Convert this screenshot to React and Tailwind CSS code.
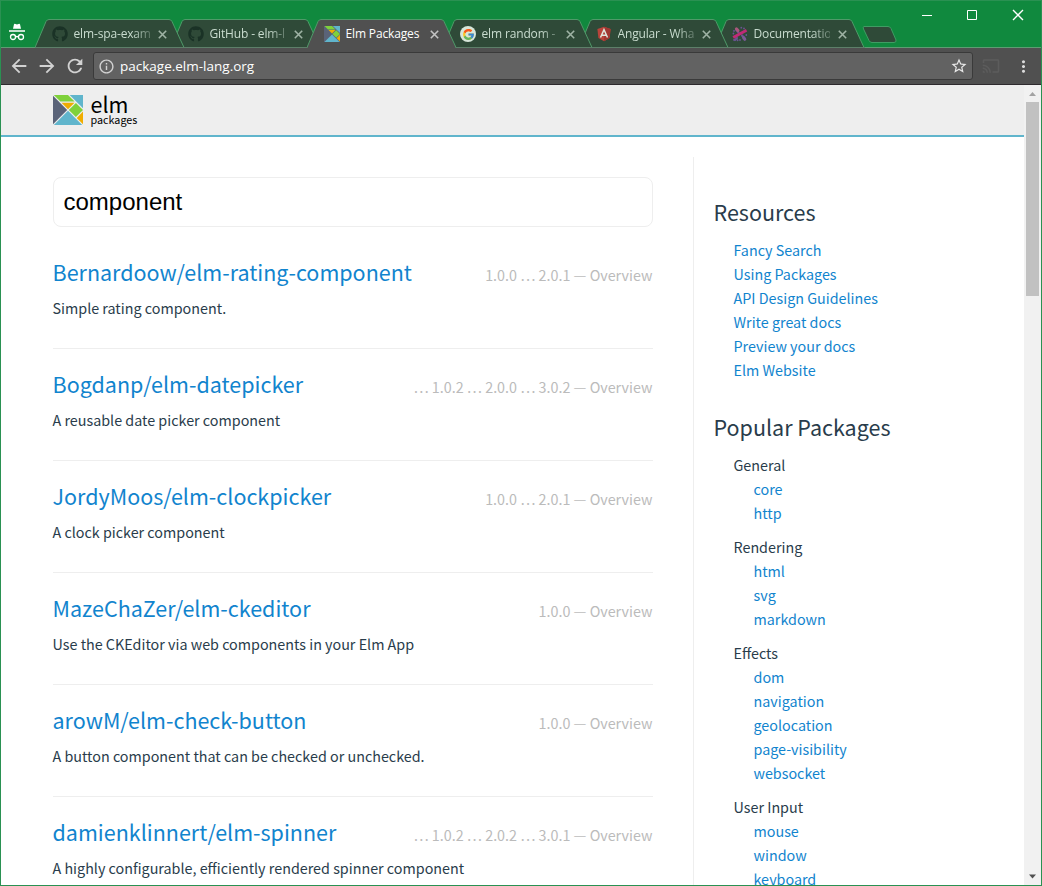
import React from "react";
import { MdArrowBack, MdArrowForward, MdRefresh, MdInfoOutline, MdStarBorder, MdCast, MdMoreVert } from "react-icons/md";
import { FaGithub } from "react-icons/fa";
import { FcGoogle } from "react-icons/fc";

const packages = [
  { name: "Bernardoow/elm-rating-component", versions: "1.0.0 … 2.0.1 — Overview", summary: "Simple rating component." },
  { name: "Bogdanp/elm-datepicker", versions: "… 1.0.2 … 2.0.0 … 3.0.2 — Overview", summary: "A reusable date picker component" },
  { name: "JordyMoos/elm-clockpicker", versions: "1.0.0 … 2.0.1 — Overview", summary: "A clock picker component" },
  { name: "MazeChaZer/elm-ckeditor", versions: "1.0.0 — Overview", summary: "Use the CKEditor via web components in your Elm App" },
  { name: "arowM/elm-check-button", versions: "1.0.0 — Overview", summary: "A button component that can be checked or unchecked." },
  { name: "damienklinnert/elm-spinner", versions: "… 1.0.2 … 2.0.2 … 3.0.1 — Overview", summary: "A highly configurable, efficiently rendered spinner component" },
];

const resources = ["Fancy Search", "Using Packages", "API Design Guidelines", "Write great docs", "Preview your docs", "Elm Website"];

const popular = [
  { title: "General", items: ["core", "http"] },
  { title: "Rendering", items: ["html", "svg", "markdown"] },
  { title: "Effects", items: ["dom", "navigation", "geolocation", "page-visibility", "websocket"] },
  { title: "User Input", items: ["mouse", "window", "keyboard"] },
];

function ElmLogo({ className }) {
  return (
    <svg className={className} viewBox="0 0 323.3 323.3">
      <polygon fill="#F0AD00" points="161.649,152.782 231.514,82.916 91.783,82.916" />
      <polygon fill="#7FD13B" points="8.867,0 79.241,70.375 232.213,70.375 161.838,0" />
      <rect fill="#7FD13B" x="192.99" y="107.392" width="107.676" height="108.167" transform="matrix(0.7071 0.7071 -0.7071 0.7071 186.4727 -127.2386)" />
      <polygon fill="#60B5CC" points="323.298,143.724 323.298,0 179.573,0" />
      <polygon fill="#5A6378" points="152.781,161.649 0,8.868 0,314.432" />
      <polygon fill="#F0AD00" points="255.522,246.655 323.298,314.432 323.298,178.879" />
      <polygon fill="#60B5CC" points="161.649,170.517 8.869,323.298 314.43,323.298" />
    </svg>
  );
}

function GoogleIcon() {
  return (
    <span className="flex size-4 items-center justify-center rounded-full bg-[#d7e6da]">
      <FcGoogle className="size-[13px] opacity-85" />
    </span>
  );
}

function AngularIcon() {
  return (
    <svg className="size-4" viewBox="0 0 16 16">
      <path fill="#b8433a" d="M8 .8 14.6 3l-1 9L8 15.3 2.4 12l-1-9Z" />
      <path fill="#a03732" d="M8 .8 14.6 3l-1 9L8 15.3Z" />
      <path fill="none" stroke="#dfe5dc" strokeWidth="1.5" d="M4.5 11.5 8 3.6l3.5 7.9M5.8 9.3h4.4" />
    </svg>
  );
}

function DocsIcon() {
  return (
    <svg className="size-4" viewBox="0 0 16 16" fill="none" strokeLinecap="round">
      <path stroke="#6c5494" strokeWidth="2.2" d="M6.5 6.5 4 3.5M10 9.5l3 3.5M3 14l2-2" />
      <path stroke="#a8587c" strokeWidth="3" d="M4.4 2.8 6 4.6" />
      <path stroke="#7b5a94" strokeWidth="3" d="m11.5 11.5 1.3 1.8" />
      <path stroke="#c02a76" strokeWidth="3" strokeLinecap="butt" d="M1.2 11.5 14.5 4.2" />
      <path stroke="#6c5494" strokeWidth="1.8" d="M9.3 1.6v.1M12 2.3v.1M1.4 7.4v.1M2 4.8v.1M14.3 9v.1M8 14v.1M5.6 14.2v.1M2 13.8v.1" />
    </svg>
  );
}

const tabs = [
  { title: "elm-spa-exam", icon: <FaGithub className="size-4 text-[#1a3226]" />, z: "z-[6]" },
  { title: "GitHub - elm-l", icon: <FaGithub className="size-4 text-[#1a3226]" />, z: "z-[5]" },
  { title: "Elm Packages", icon: <ElmLogo className="size-4 bg-[#5a6378]" />, active: true, z: "z-10" },
  { title: "elm random -", icon: <GoogleIcon />, z: "z-[4]" },
  { title: "Angular - Wha", icon: <AngularIcon />, z: "z-[3]" },
  { title: "Documentatio", icon: <DocsIcon />, z: "z-[2]" },
];

function Tab({ tab }) {
  const fill = tab.active ? "#505050" : "#2f4a38";
  const fade = tab.active ? "" : "[mask-image:linear-gradient(to_right,black_58px,transparent_84px)]";
  return (
    <div className={`relative -mr-[14px] flex h-[29px] w-[150px] shrink-0 items-center pl-[17px] ${tab.z}`}>
      <svg className="absolute inset-0" width="150" height="29" viewBox="0 0 150 29">
        <path d="M0 28.5 11 2.5Q12 .5 14 .5H134Q136 .5 137 2.5L149 28.5" fill={fill} stroke="#4f9a69" />
        {tab.active && <path d="M1 28.5H148" stroke="#505050" />}
        {!tab.active && <path d="M0 28.5H150" stroke="#5d7f69" />}
      </svg>
      <span className="relative mt-px">{tab.icon}</span>
      <span className={`relative ml-[5.5px] w-[76px] whitespace-nowrap text-[12px] leading-4 tracking-[-0.15px] ${fade} ${tab.active ? "text-white" : "text-[#c9dccf]"}`}>{tab.title}</span>
      <svg className="relative ml-2 mt-px" width="9" height="9" viewBox="0 0 9 9">
        <path d="M.8.8 8.2 8.2M8.2.8.8 8.2" stroke={tab.active ? "#c4c4c4" : "#9fb3a5"} strokeWidth="1.6" />
      </svg>
    </div>
  );
}

function Incognito() {
  return (
    <svg className="ml-[7px] mt-[22px] shrink-0" width="18" height="18" viewBox="0 0 18 18">
      <path fill="#fff" d="M5 5.7 6 1.2Q6.200.7 6.800.8L9 1.500 11.200.8Q11.800.7 12 1.200L13 5.700ZM1 7.200H17V8.700H1Z" />
      <path fill="none" stroke="#fff" strokeWidth="1.4" d="M7.500 14Q9 13 10.500 14" />
      <circle cx="5" cy="14" r="2.500" fill="none" stroke="#fff" strokeWidth="1.300" />
      <circle cx="13" cy="14" r="2.500" fill="none" stroke="#fff" strokeWidth="1.300" />
    </svg>
  );
}

function TitleBar() {
  return (
    <div className="flex h-[47px] shrink-0 bg-[#10893e] shadow-[inset_0_-1px_0_#5d9d73]">
      <Incognito />
      <div className="ml-[9px] mt-[18px] flex items-start">
        {tabs.map((t) => <Tab key={t.title} tab={t} />)}
        <svg className="ml-[11px] mt-[7px]" width="36" height="17" viewBox="0 0 36 17">
          <path d="M2 .5H26Q28 .5 29 2.500L34 14Q34.500 16.500 32 16.500H10Q8 16.500 7 14.500L1.500 3Q.5.500 2 .5Z" fill="#2f4a38" stroke="#3f9c63" />
        </svg>
      </div>
      <svg className="ml-auto mr-[17px] mt-[8px] shrink-0" width="102" height="12" viewBox="0 0 102 12" fill="none" stroke="#fff">
        <path d="M0 6.500H10M45.500 1.500H54.500V10.500H45.500Z" />
        <path strokeWidth="1.4" d="M91 1 101 11M101 1 91 11" />
      </svg>
    </div>
  );
}

function Toolbar() {
  return (
    <div className="flex h-[37px] shrink-0 items-center border-b border-[#2e2a2e] bg-[#505050] pl-[7px] text-[#d2d2d2]">
      <MdArrowBack className="size-[22px]" />
      <MdArrowForward className="ml-[6px] size-[22px]" />
      <MdRefresh className="ml-[6px] size-[22px]" />
      <div className="ml-[7px] flex h-7 w-[880px] items-center rounded-[3px] border border-[#3a3a3a] bg-[#626262] pl-1 pr-1">
        <MdInfoOutline className="size-[17px]" />
        <span className="ml-[5px] flex-1 text-[13.5px] text-white">package.elm-lang.org</span>
        <MdStarBorder className="size-[18px] text-[#e8e8e8]" />
      </div>
      <MdCast className="ml-[9px] size-[18px] text-[#5c5c5c]" />
      <MdMoreVert className="ml-[14px] size-[19px] text-[#dcdcdc]" />
    </div>
  );
}

function Header() {
  return (
    <header className="flex h-[52px] shrink-0 border-b-2 border-[#60b5cc] bg-[#eeeeee] pl-[52px] pt-[10px] text-black">
      <ElmLogo className="size-[30px]" />
      <div className="-mt-px ml-[7.5px]">
        <div className="text-[21.5px] leading-5">elm</div>
        <div className="mt-px text-[10.75px] leading-[10px]">packages</div>
      </div>
    </header>
  );
}

function PackageRow({ pkg }) {
  return (
    <li className="h-[112px] shrink-0 border-b border-[#eeeeee] pt-[19px]">
      <div className="-ml-[0.5px] flex items-baseline justify-between whitespace-nowrap pr-[0.5px]">
        <a className="text-[21.5px] leading-8 text-[#1184ce]">{pkg.name}</a>
        <span className="text-[14.33px] leading-6 text-[#bbbbbb]">{pkg.versions}</span>
      </div>
      <p className="-ml-[0.5px] mt-2 text-[14.33px] leading-6">{pkg.summary}</p>
    </li>
  );
}

function Sidebar() {
  return (
    <aside className="mt-5 h-[760px] w-[300px] border-l border-[#eeeeee] pl-[19.5px] text-[14.33px] leading-6">
      <h2 className="mt-[39px] text-[21.5px] leading-8">Resources</h2>
      <ul className="mt-[10px] pl-5 text-[#1184ce]">
        {resources.map((r) => <li key={r}>{r}</li>)}
      </ul>
      <h2 className="mt-[29px] text-[21.5px] leading-8">Popular Packages</h2>
      <div className="mt-[10px] flex flex-col gap-[10px] pl-5">
        {popular.map((g) => (
          <section key={g.title}>
            <h3>{g.title}</h3>
            <ul className="pl-5 text-[#1184ce]">
              {g.items.map((i) => <li key={i}>{i}</li>)}
            </ul>
          </section>
        ))}
      </div>
    </aside>
  );
}

function Scrollbar() {
  return (
    <div className="flex w-[17px] shrink-0 flex-col items-center bg-[#f1f1f1]">
      <svg width="17" height="17" viewBox="0 0 17 17"><path fill="#a3a3a3" d="M5 11 8.500 7 12 11Z" /></svg>
      <div className="h-[194px] w-[13px] bg-[#c1c1c1]" />
      <svg className="mt-auto" width="17" height="17" viewBox="0 0 17 17"><path fill="#505050" d="M5 6.500H12L8.500 10.500Z" /></svg>
    </div>
  );
}

export default function App() {
  return (
    <div className="flex h-[886px] w-[1042px] flex-col overflow-hidden border border-[#2a9152] bg-white font-['Open_Sans','Noto_Sans',sans-serif]">
      <TitleBar />
      <Toolbar />
      <div className="flex min-h-0 flex-1">
        <div className="flex min-w-0 flex-1 flex-col overflow-hidden font-['Noto_Sans_CJK_SC',sans-serif] text-[#293c4b]">
          <Header />
          <div className="flex min-h-0 flex-1 overflow-hidden">
            <main className="ml-[52px] mr-10 w-[600px] shrink-0 pt-[40px]">
              <input className="block h-[50px] w-full rounded-lg border border-[#eeeeee] px-[9.5px] font-['Liberation_Sans',sans-serif] text-2xl text-black outline-none" defaultValue="component" />
              <ul className="mt-[10px]">
                {packages.map((p) => <PackageRow key={p.name} pkg={p} />)}
              </ul>
            </main>
            <Sidebar />
          </div>
        </div>
        <Scrollbar />
      </div>
    </div>
  );
}
